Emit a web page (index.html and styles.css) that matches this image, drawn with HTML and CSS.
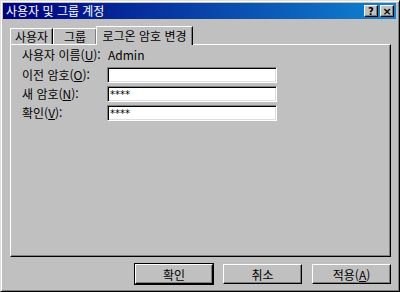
FILE: index.html
```html
<!DOCTYPE html>
<html lang="ko">
<head>
    <meta charset="UTF-8">
    <title>사용자 및 그룹 계정</title>
    <link rel="stylesheet" href="styles.css">
</head>
<body>
    <div class="window">
        <div class="titlebar">
            <span class="title">사용자 및 그룹 계정</span>
            <div class="title-buttons">
                <button class="tbtn">?</button>
                <button class="tbtn close">×</button>
            </div>
        </div>

        <div class="content">
            <div class="tabs">
                <div class="tab users">사용자</div>
                <div class="tab groups">그룹</div>
                <div class="tab active">로그온 암호 변경</div>
            </div>

            <div class="panel">
                <div class="form">
                    <label class="first">사용자 이름(<u>U</u>):</label>
                    <span class="first value">Admin</span>

                    <label>이전 암호(<u>O</u>):</label>
                    <input class="field" type="password" value="">

                    <label>새 암호(<u>N</u>):</label>
                    <input class="field" type="text" value="****">

                    <label>확인(<u>V</u>):</label>
                    <input class="field" type="text" value="****">
                </div>
            </div>

            <div class="actions">
                <button class="btn default">확인</button>
                <button class="btn">취소</button>
                <button class="btn">적용(<u>A</u>)</button>
            </div>
        </div>
    </div>
</body>
</html>
```

FILE: styles.css
```css
body {
    margin: 0;
    padding: 0;
    font-family: "Noto Sans CJK KR", "DejaVu Sans", sans-serif;
    font-size: 12px;
    background: #c0c0c0;
}

.window {
    width: 400px;
    height: 292px;
    box-sizing: border-box;
    background: #c0c0c0;
    border-top: 1px solid #dfdfdf;
    border-left: 1px solid #dfdfdf;
    border-right: 1px solid #000;
    border-bottom: 1px solid #000;
    box-shadow: inset 1px 1px #fff, inset -1px -1px #808080;
    padding: 2px 3px 0 2px;
    display: flex;
    flex-direction: column;
}

.titlebar {
    height: 16px;
    background: linear-gradient(to right, #000080, #1084d0);
    color: #fff;
    display: flex;
    align-items: center;
    justify-content: space-between;
    padding: 0 2px 0 3px;
}

.title {
    font-size: 12px;
    line-height: 16px;
}

.title-buttons {
    display: flex;
    gap: 2px;
}

.tbtn {
    width: 14px;
    height: 12px;
    padding: 0;
    margin: 0;
    font-family: "DejaVu Sans", sans-serif;
    font-size: 10px;
    font-weight: bold;
    line-height: 9px;
    background: #c0c0c0;
    color: #000;
    border-top: 1px solid #fff;
    border-left: 1px solid #fff;
    border-right: 1px solid #000;
    border-bottom: 1px solid #000;
    box-shadow: inset -1px -1px #808080;
}

.tbtn.close {
    font-size: 11px;
}

.content {
    flex: 1;
    padding: 0 5px 0 7px;
    display: flex;
    flex-direction: column;
}

.tabs {
    display: flex;
    align-items: flex-end;
    height: 25px;
    position: relative;
    z-index: 1;
}

.tab {
    box-sizing: border-box;
    height: 16px;
    line-height: 15px;
    padding: 0;
    text-align: center;
    white-space: nowrap;
    border-top: 1px solid #fff;
    border-left: 1px solid #fff;
    border-right: 1px solid #000;
    box-shadow: inset -1px 0 #808080;
    color: #000;
}

.tab.users {
    width: 43px;
}

.tab.groups {
    width: 44px;
}

.tab.active {
    width: 97px;
    height: 19px;
    line-height: 17px;
    background: #c0c0c0;
    margin-bottom: -1px;
    margin-left: -1px;
}

.panel {
    height: 213px;
    box-sizing: border-box;
    border-top: 1px solid #fff;
    border-left: 1px solid #fff;
    border-right: 1px solid #000;
    border-bottom: 1px solid #000;
    box-shadow: inset -1px -1px #808080;
    padding: 3px 0 0 11px;
}

.form {
    display: grid;
    grid-template-columns: 85px 170px;
    grid-auto-rows: 16px;
    row-gap: 3px;
    align-items: center;
}

.form label,
.form .value {
    line-height: 16px;
    white-space: nowrap;
}

.form .first {
    margin-bottom: 2px;
}

.value {
    padding-left: 1px;
}

.field {
    width: 170px;
    height: 16px;
    box-sizing: border-box;
    margin: 0;
    padding: 0 2px;
    font-family: "DejaVu Sans", sans-serif;
    font-size: 10px;
    background: #fff;
    color: #000;
    border-top: 1px solid #808080;
    border-left: 1px solid #808080;
    border-right: 1px solid #fff;
    border-bottom: 1px solid #fff;
    box-shadow: inset 1px 1px #000, inset -1px -1px #dfdfdf;
    outline: none;
}

.actions {
    display: flex;
    justify-content: flex-end;
    gap: 10px;
    padding: 7px 0 0 0;
}

.btn {
    width: 79px;
    height: 20px;
    padding: 0;
    margin: 0;
    font-family: "Noto Sans CJK KR", sans-serif;
    font-size: 12px;
    color: #000;
    background: #c0c0c0;
    border-top: 1px solid #fff;
    border-left: 1px solid #fff;
    border-right: 1px solid #000;
    border-bottom: 1px solid #000;
    box-shadow: inset -1px -1px #808080;
}

.btn.default {
    width: 78px;
    outline: 1px solid #000;
}
```
